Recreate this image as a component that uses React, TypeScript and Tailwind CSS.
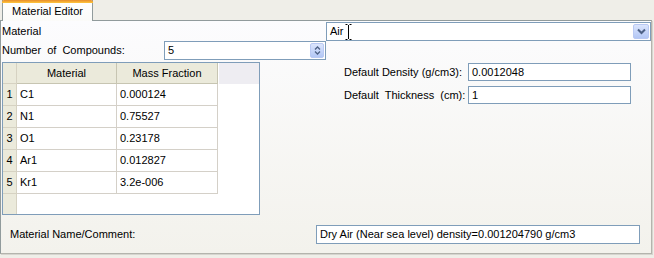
import React from "react";

const rows = [
  ["1", "C1", "0.000124"],
  ["2", "N1", "0.75527"],
  ["3", "O1", "0.23178"],
  ["4", "Ar1", "0.012827"],
  ["5", "Kr1", "3.2e-006"],
];

function XPButton({ children, className = "" }: { children: React.ReactNode; className?: string }) {
  return (
    <div
      className={
        "flex items-center justify-center rounded-[2px] border border-[#b9c9f3] bg-gradient-to-b from-[#dbe5fd] to-[#b3c7f5] " +
        className
      }
    >
      {children}
    </div>
  );
}

export default function App() {
  return (
    <div
      className="w-[654px] h-[258px] bg-[#efeee8] text-black text-[11px] leading-none overflow-hidden"
      style={{ fontFamily: '"Liberation Sans", Arial, sans-serif' }}
    >
      {/* tab strip */}
      <div className="h-[20px] flex items-end pl-[2px]">
        <div className="relative z-10 h-[21px] w-[91px] mb-[-1px] border-x border-[#919b9c] bg-gradient-to-b from-[#ffffff] to-[#fbfbf9] flex items-center justify-center pt-[2px]">
          <div className="absolute left-[-1px] right-[-1px] top-0 h-[3px] rounded-t-[2px] bg-gradient-to-b from-[#e68b2c] to-[#ffc73c]" />
          <span>Material Editor</span>
        </div>
      </div>
      {/* panel */}
      <div className="h-[234px] w-[652px] border border-[#919b9c] border-r-[#b4b4ad] border-b-[#b4b4ad] bg-gradient-to-b from-[#fcfcfe] to-[#f3f2ec] shadow-[1px_1px_0_#d6d5cf] flex flex-col">
        {/* row 1 */}
        <div className="flex items-center h-[19px] mt-[1px]">
          <div className="w-[325px] pl-[1px]">Material</div>
          <div className="relative w-[325px] h-[19px] border border-[#7f9db9] bg-white flex items-center pl-[3px]">
            <span>Air</span>
            <svg width="7" height="16" viewBox="0 0 7 16" className="ml-[2px]">
              <path d="M0.5 0.5h2M4.5 0.5h2M3.5 1v14M0.5 15.5h2M4.5 15.5h2" stroke="#000" strokeWidth="1" fill="none" />
            </svg>
            <XPButton className="absolute right-[1px] top-[1px] w-[16px] h-[15px]">
              <svg width="9" height="7" viewBox="0 0 9 7">
                <path d="M1 1.5 L4.5 5 L8 1.5" stroke="#4d6185" strokeWidth="2" fill="none" />
              </svg>
            </XPButton>
          </div>
        </div>
        {/* row 2 */}
        <div className="flex items-center h-[19px]">
          <div className="w-[163px] pl-[1px] [word-spacing:3px]">Number of Compounds:</div>
          <div className="relative w-[162px] h-[19px] border border-[#7f9db9] bg-white flex items-center pl-[3px]">
            <span>5</span>
            <XPButton className="absolute right-[1px] top-[1px] w-[14px] h-[15px] flex-col gap-[1px]">
              <svg width="7" height="4" viewBox="0 0 7 4">
                <path d="M1 3.5 L3.5 1 L6 3.5" stroke="#4d6185" strokeWidth="1.3" fill="none" />
              </svg>
              <svg width="7" height="4" viewBox="0 0 7 4">
                <path d="M1 0.5 L3.5 3 L6 0.5" stroke="#4d6185" strokeWidth="1.3" fill="none" />
              </svg>
            </XPButton>
          </div>
        </div>
        {/* row 3 */}
        <div className="flex mt-[2px]">
          <div className="ml-[1px] w-[258px] h-[153px] border border-[#7f9db9] bg-white flex flex-col">
            <div className="flex h-[21px] bg-[#eeedf2]">
              <div className="w-[14px] bg-[#ebeadb] border-r border-b border-[#d6d2c2]" />
              <div className="w-[100px] bg-[#ebeadb] border-r border-b border-[#c7c5b2] flex items-center justify-center">
                Material
              </div>
              <div className="w-[101px] bg-[#ebeadb] border-r border-b border-[#c7c5b2] flex items-center justify-center">
                Mass Fraction
              </div>
              <div className="flex-1 border-l border-white" />
            </div>
            {rows.map((r) => (
              <div key={r[0]} className="flex h-[22px]">
                <div className="w-[14px] bg-[#ebeadb] border-r border-b border-[#d6d2c2] flex items-center justify-center">
                  {r[0]}
                </div>
                <div className="w-[100px] border-r border-b border-[#d4d0c8] flex items-center pl-[3px]">{r[1]}</div>
                <div className="w-[101px] border-r border-b border-[#d4d0c8] flex items-center pl-[3px]">{r[2]}</div>
              </div>
            ))}
            <div className="flex flex-1">
              <div className="w-[14px] bg-[#ebeadb] border-r border-[#d6d2c2]" />
            </div>
          </div>
          <div className="ml-[84px] flex flex-col gap-[5px] mt-[1px]">
            <div className="flex items-center h-[18px]">
              <div className="w-[124px]">Default Density (g/cm3):</div>
              <div className="w-[163px] h-[18px] border border-[#7f9db9] bg-white flex items-center pl-[3px]">0.0012048</div>
            </div>
            <div className="flex items-center h-[18px]">
              <div className="w-[124px] [word-spacing:3px]">Default Thickness (cm):</div>
              <div className="w-[163px] h-[18px] border border-[#7f9db9] bg-white flex items-center pl-[3px]">1</div>
            </div>
          </div>
        </div>
        {/* row 4 */}
        <div className="flex items-center h-[19px] mt-[10px]">
          <div className="w-[315px] pl-[9px]">Material Name/Comment:</div>
          <div className="w-[324px] h-[19px] border border-[#7f9db9] bg-white flex items-center pl-[3px]">
            Dry Air (Near sea level) density=0.001204790 g/cm3
          </div>
        </div>
      </div>
    </div>
  );
}
